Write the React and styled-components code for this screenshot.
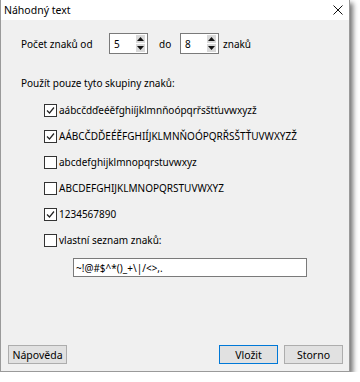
import React from "react";
import styled, { createGlobalStyle } from "styled-components";

const GlobalStyle = createGlobalStyle`
  html, body {
    margin: 0;
    padding: 0;
    background: #ffffff;
  }
  body {
    font-family: "Noto Sans", "Open Sans", sans-serif;
    font-size: 10px;
    color: #000;
  }
`;

const Window = styled.div`
  width: 350px;
  height: 372px;
  box-sizing: border-box;
  border: 1px solid #9a9a9a;
  border-top: none;
  background: #f0f0f0;
  box-shadow: 3px 3px 5px rgba(0, 0, 0, 0.55);
  display: flex;
  flex-direction: column;
`;

const TitleBar = styled.div`
  height: 20px;
  background: #ffffff;
  display: flex;
  align-items: center;
  justify-content: space-between;
  padding: 0 6px 0 3px;
  font-size: 10.5px;
`;

const Body = styled.div`
  flex: 1;
  display: flex;
  flex-direction: column;
  padding: 13px 0 0 20px;
`;

const CountRow = styled.div`
  display: flex;
  align-items: center;
  height: 21px;
`;

const Label = styled.span`
  width: ${(p) => (p.$width ? `${p.$width}px` : "auto")};
  flex-shrink: 0;
`;

const Spin = styled.div`
  width: 39px;
  height: 21px;
  box-sizing: border-box;
  border: 1px solid #7a7a7a;
  background: #fff;
  display: flex;
  align-items: center;
  justify-content: space-between;
  padding: 0 2px 0 4px;
  margin-right: ${(p) => p.$gap || 0}px;
`;

const SpinButtons = styled.div`
  display: flex;
  flex-direction: column;
  gap: 1px;
`;

const SpinBtn = styled.div`
  width: 9px;
  height: 8px;
  background: #d9d9d9;
  display: flex;
  align-items: center;
  justify-content: center;
`;

const GroupLabel = styled.div`
  margin-top: 21px;
  height: 16px;
  line-height: 16px;
`;

const List = styled.div`
  margin-top: 6px;
  padding-left: 23px;
  display: flex;
  flex-direction: column;
`;

const Row = styled.label`
  height: 26px;
  display: flex;
  align-items: center;
`;

const Box = styled.span`
  width: 11px;
  height: 11px;
  border: 1px solid #333;
  background: #fff;
  margin-right: 2px;
  display: flex;
  align-items: center;
  justify-content: center;
`;

const CustomInput = styled.div`
  margin: 5px 0 0 52px;
  width: 234px;
  height: 19px;
  box-sizing: border-box;
  border: 1px solid #7a7a7a;
  background: #fff;
  display: flex;
  align-items: center;
  padding-left: 2px;
`;

const Footer = styled.div`
  margin-top: auto;
  display: flex;
  align-items: center;
  padding: 0 6px 7px 7px;
`;

const Button = styled.div`
  width: 59px;
  height: 19px;
  box-sizing: border-box;
  border: 1px solid ${(p) => (p.$primary ? "#0078d7" : "#adadad")};
  background: #e1e1e1;
  display: flex;
  align-items: center;
  justify-content: center;
  font-size: 10.5px;
  margin-left: ${(p) => p.$gap || 0}px;
`;

const Spacer = styled.div`
  flex: 1;
`;

const Arrow = ({ up }) => (
  <svg width="7" height="4" viewBox="0 0 7 4">
    <path d={up ? "M0 4 L3.5 0 L7 4 Z" : "M0 0 L3.5 4 L7 0 Z"} fill="#111" />
  </svg>
);

const SpinBox = ({ value, gap }) => (
  <Spin $gap={gap}>
    <span>{value}</span>
    <SpinButtons>
      <SpinBtn>
        <Arrow up />
      </SpinBtn>
      <SpinBtn>
        <Arrow />
      </SpinBtn>
    </SpinButtons>
  </Spin>
);

const Check = ({ checked }) => (
  <Box>
    {checked && (
      <svg width="9" height="9" viewBox="0 0 9 9">
        <path d="M1 4.5 L3.5 7 L8 1.5" fill="none" stroke="#222" strokeWidth="1.2" />
      </svg>
    )}
  </Box>
);

const groups = [
  { text: "aábcčdďeéěfghiíjklmnňoópqrřsštťuvwxyzž", checked: true },
  { text: "AÁBCČDĎEÉĚFGHIÍJKLMNŇOÓPQRŘSŠTŤUVWXYZŽ", checked: true },
  { text: "abcdefghijklmnopqrstuvwxyz", checked: false },
  { text: "ABCDEFGHIJKLMNOPQRSTUVWXYZ", checked: false },
  { text: "1234567890", checked: true },
  { text: "vlastní seznam znaků:", checked: false },
];

export default function App() {
  return (
    <>
      <GlobalStyle />
      <Window>
        <TitleBar>
          <span>Náhodný text</span>
          <svg width="10" height="10" viewBox="0 0 10 10">
            <path d="M0.5 0.5 L9.5 9.5 M9.5 0.5 L0.5 9.5" stroke="#111" strokeWidth="1" />
          </svg>
        </TitleBar>
        <Body>
          <CountRow>
            <Label $width={88}>Počet znaků od</Label>
            <SpinBox value="5" gap={11} />
            <Label $width={21}>do</Label>
            <SpinBox value="8" gap={4} />
            <Label>znaků</Label>
          </CountRow>
          <GroupLabel>Použít pouze tyto skupiny znaků:</GroupLabel>
          <List>
            {groups.map((g) => (
              <Row key={g.text}>
                <Check checked={g.checked} />
                {g.text}
              </Row>
            ))}
          </List>
          <CustomInput>~!@#$^*()_+\|/&lt;&gt;,.</CustomInput>
        </Body>
        <Footer>
          <Button>Nápověda</Button>
          <Spacer />
          <Button $primary>Vložit</Button>
          <Button $gap={6}>Storno</Button>
        </Footer>
      </Window>
    </>
  );
}
